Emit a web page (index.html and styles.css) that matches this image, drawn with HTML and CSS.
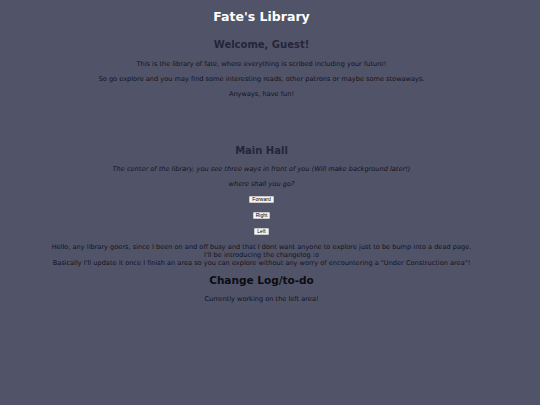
FILE: index.html
```html
<!DOCTYPE html>
<html>
<head>
<meta charset="utf-8">
<link rel="stylesheet" href="styles.css">
</head>
<body>
<h1 class="title">Fate's Library</h1>
<section class="welcome">
  <h2 class="heading">Welcome, Guest!</h2>
  <p>This is the library of fate, where everything is scribed including your future!</p>
  <p>So go explore and you may find some interesting reads, other patrons or maybe some stowaways.</p>
  <p>Anyways, have fun!</p>
</section>
<section class="hall">
  <h2 class="heading">Main Hall</h2>
  <p class="italic">The center of the library, you see three ways in front of you (Will make background later!)</p>
  <p class="italic">where shall you go?</p>
  <div class="btnrow"><button class="btn">Forward</button></div>
  <div class="btnrow"><button class="btn">Right</button></div>
  <div class="btnrow"><button class="btn">Left</button></div>
</section>
<div class="note">Hello, any library goers, since I been on and off busy and that I dont want anyone to explore just to be bump into a dead page.<br>I'll be introducing the changelog :o<br>Basically I'll update it once I finish an area so you can explore without any worry of encountering a "Under Construction area"!</div>
<h3 class="log">Change Log/to-do</h3>
<p class="current">Currently working on the left area!</p>
</body>
</html>
```
FILE: styles.css
```css
html, body {
  margin: 0;
  padding: 0;
}
body {
  background: #515468;
  font-family: "DejaVu Sans", Verdana, sans-serif;
  font-size: 6.6px;
  color: #12121c;
  text-align: center;
  padding: 10px 17px 0 0;
}
.title {
  color: #ffffff;
  font-size: 12.5px;
  line-height: 14px;
  margin: 0 0 15px;
}
.heading {
  color: #25253a;
  font-size: 10px;
  line-height: 12px;
  margin: 0 0 9px;
}
p {
  margin: 0 0 7px;
  line-height: 8px;
}
.welcome {
  margin-bottom: 47px;
}
.welcome p:last-child {
  margin-bottom: 0;
}
.hall .heading {
  margin-bottom: 8px;
}
.italic {
  font-style: italic;
}
.btnrow {
  height: 8px;
  line-height: 8px;
  margin: 7px 0 8px;
  display: flex;
  justify-content: center;
  align-items: center;
}
.btnrow + .btnrow + .btnrow {
  margin-top: 7px;
}
.btn {
  font-family: "Liberation Sans", Arial, sans-serif;
  font-size: 5px;
  line-height: 5px;
  height: 7px;
  background: #f4f4f4;
  border: 1px solid #c8c8c8;
  padding: 0 2px;
  color: #000;
  border-radius: 1px;
}
.note {
  line-height: 8px;
}
.log {
  color: #0c0c12;
  font-size: 10.5px;
  line-height: 13px;
  margin: 6.5px 0 8px;
}
```
